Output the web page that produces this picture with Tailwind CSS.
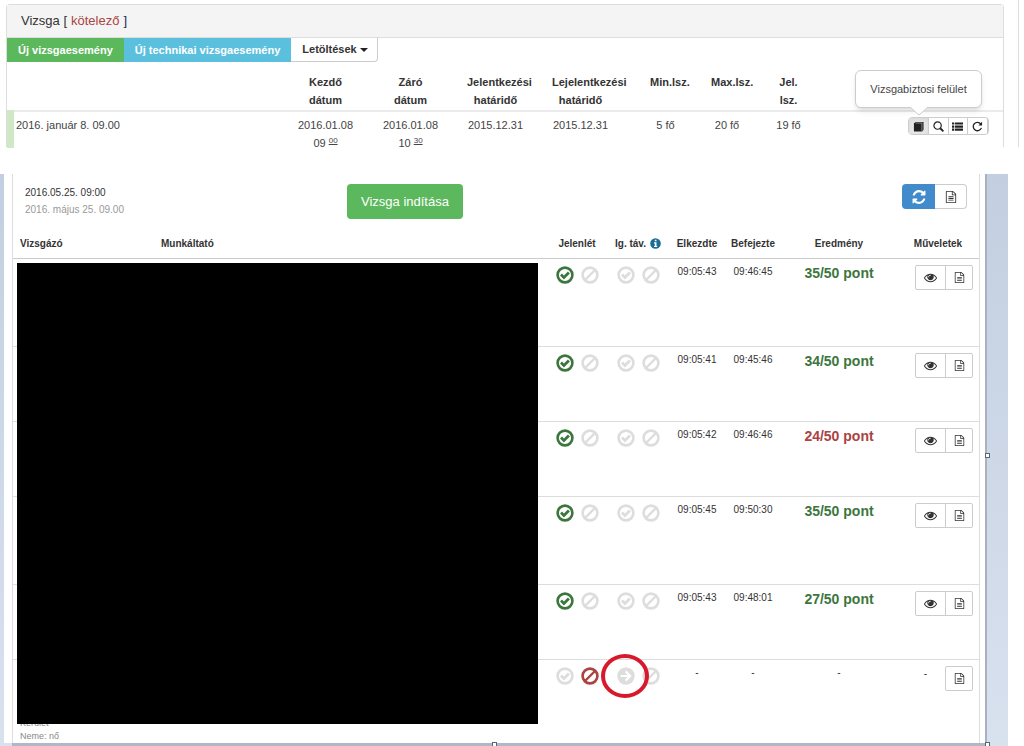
<!DOCTYPE html>
<html lang="hu">
<head>
<meta charset="utf-8">
<meta name="viewport" content="width=device-width, initial-scale=1">
<title>Vizsga</title>
<script src="https://cdn.jsdelivr.net/npm/@tailwindcss/browser@4"></script>
</head>
<body class="bg-white font-['Liberation_Sans',Arial,sans-serif] text-[#333]">
<svg class="hidden" aria-hidden="true">
  <symbol id="check" viewBox="0 0 18 18"><circle cx="9" cy="9" r="7.4" fill="none" stroke="currentColor" stroke-width="2.6"/><path d="M5 8.600l2.900 2.900 5-5" fill="none" stroke="currentColor" stroke-width="2.8"/></symbol>
  <symbol id="ban" viewBox="0 0 18 18"><circle cx="9" cy="9" r="7.4" fill="none" stroke="currentColor" stroke-width="2.6"/><path d="M4 14L14 4" fill="none" stroke="currentColor" stroke-width="2.4"/></symbol>
  <symbol id="arrow" viewBox="0 0 18 18"><circle cx="9" cy="9" r="8.7" fill="currentColor"/><path d="M3.600 9h9M8.600 4.400L13.200 9l-4.600 4.600" fill="none" stroke="#fff" stroke-width="2.2"/></symbol>
  <symbol id="file" viewBox="0 0 1536 1792"><path fill="currentColor" d="M1468 380q28 28 48 76t20 88v1152q0 40-28 68t-68 28H96q-40 0-68-28t-28-68V96q0-40 28-68T96 0h896q40 0 88 20t76 48zm-444-244v376h376q-10-29-22-41l-313-313q-12-12-41-22zm384 1528V640H992q-40 0-68-28t-28-68V128H128v1536h1280zM384 800h768v120H384zM384 1056h768v120H384zM384 1312h768v120H384z"/></symbol>
  <symbol id="eye" viewBox="0 0 1792 1792"><path fill="currentColor" d="M1664 960q-152-236-381-353 61 104 61 225 0 185-131.500 316.500T896 1280t-316.500-131.500T448 832q0-121 61-225-229 117-381 353 133 205 333.500 326.500T896 1408t434.500-121.500T1664 960zM944 576q0-20-14-34t-34-14q-125 0-214.500 89.500T592 832q0 20 14 34t34 14 34-14 14-34q0-86 61-147t147-61q20 0 34-14t14-34zm848 384q0 34-20 69-140 230-376.500 368.500T896 1536t-499.500-139T20 1029q-20-35-20-69t20-69q140-229 376.500-368T896 384t499.500 139T1772 891q20 35 20 69z"/></symbol>
  <symbol id="refresh" viewBox="0 0 1536 1664"><path fill="currentColor" d="M1511 1056q0 5-1 7-64 268-268 434.500T764 1664q-146 0-282.500-55T238 1452l-129 129q-19 19-45 19t-45-19-19-45v-448q0-26 19-45t45-19h448q26 0 45 19t19 45-19 45l-137 137q71 66 161 102t187 36q134 0 250-65t186-179q11-17 53-117 8-23 30-23h192q13 0 22.500 9.500t9.500 22.500zm25-928v448q0 26-19 45t-45 19h-448q-26 0-45-19t-19-45 19-45l138-138Q969 256 768 256q-134 0-250 65T332 500q-11 17-53 117-8 23-30 23H50q-13 0-22.500-9.500T18 608v-7q65-268 270-434.500T768 0q146 0 284 55.500T1297 212l130-129q19-19 45-19t45 19 19 45z"/></symbol>
  <symbol id="book" viewBox="0 0 12 12"><path fill="currentColor" d="M1 2.500L3.200 1H11.500v8.500L10 11.500H1z"/><path d="M3 2.200H10.300M9.700 2.500v8.500" stroke="#aaa" stroke-width=".8" fill="none"/></symbol>
  <symbol id="search" viewBox="0 0 12 12"><circle cx="5" cy="5" r="4" fill="none" stroke="currentColor" stroke-width="1.300"/><path d="M7.900 7.900L11.300 11.300" stroke="currentColor" stroke-width="2"/></symbol>
  <symbol id="list" viewBox="0 0 12 12"><path fill="currentColor" d="M0 1.500h2.500v2.400H0zM3.300 1.500H12v2.400H3.300zM0 4.900h2.500v2.400H0zM3.300 4.900H12v2.400H3.300zM0 8.300h2.500v2.400H0zM3.300 8.300H12v2.400H3.300z"/></symbol>
  <symbol id="repeat" viewBox="0 0 12 12"><path d="M9.600 3.200A4.600 4.600 0 1 0 10.300 7.500" fill="none" stroke="currentColor" stroke-width="1.400"/><path d="M11 .8v4H7z" fill="currentColor"/></symbol>
</svg>

<div class="flex h-[147px]">
  <section class="mt-1 ml-[6px] min-w-0 flex-1 rounded-t border border-b-0 border-[#ddd]">
    <h1 class="flex h-[33px] items-center gap-1 border-b border-[#ddd] bg-[#f4f4f4] px-[14px] text-[13px]"><span>Vizsga [</span><a href="#" class="text-[#a94442]">kötelező</a><span class="text-[#1f2a5c]">]</span></h1>
    <div class="flex h-[24px] text-[11px] font-bold">
      <button class="bg-[#5cb85c] px-[11px] text-white">Új vizsgaesemény</button>
      <button class="bg-[#5bc0de] px-[11px] text-white">Új technikai vizsgaesemény</button>
      <button class="flex items-center gap-[3px] rounded-br border-r border-b border-[#ccc] pr-[9px] pl-[11px] text-[#333]">Letöltések <span class="border-x-4 border-t-4 border-x-transparent border-t-[#222]"></span></button>
    </div>
    <table class="w-full table-fixed text-center text-[11px] leading-[18px]">
      <colgroup><col><col class="w-[85px]"><col class="w-[85px]"><col class="w-[85px]"><col class="w-[97px]"><col class="w-[61px]"><col class="w-[62px]"><col class="w-[61px]"><col class="w-[184px]"></colgroup>
      <thead>
        <tr class="h-[49px] border-b-2 border-[#ebebeb] align-top whitespace-nowrap">
          <td></td>
          <th class="px-[14px] pt-[11px]">Kezdő<br>dátum</th>
          <th class="px-[14px] pt-[11px]">Záró<br>dátum</th>
          <th class="px-[14px] pt-[11px]">Jelentkezési<br>határidő</th>
          <th class="pt-[11px] pr-[26px] pl-[14px]">Lejelentkezési<br>határidő</th>
          <th class="px-[15px] pt-[11px]">Min.lsz.</th>
          <th class="px-[15px] pt-[11px]">Max.lsz.</th>
          <th class="px-[15px] pt-[11px]">Jel.<br>lsz.</th>
          <td></td>
        </tr>
      </thead>
      <tbody class="text-[#444]">
        <tr class="h-[36px] align-top whitespace-nowrap">
          <td class="border-l-[7px] border-[#cfe9c4] pt-1 pl-[2px] text-left">2016. január 8. 09.00</td>
          <td class="pt-1">2016.01.08<div class="h-[14px]">09 <sup class="text-[8px] leading-none underline">00</sup></div></td>
          <td class="pt-1">2016.01.08<div class="h-[14px]">10 <sup class="text-[8px] leading-none underline">30</sup></div></td>
          <td class="px-[14px] pt-1">2015.12.31</td>
          <td class="pt-1 pr-[26px] pl-[14px]">2015.12.31</td>
          <td class="pt-1">5 fő</td>
          <td class="pt-1">20 fő</td>
          <td class="pt-1">19 fő</td>
          <td class="pt-[5px] pr-[14px]">
            <div class="relative ml-auto flex h-[18px] w-[81px] divide-x divide-[#ccc] rounded-sm border border-[#ccc] text-[#222]">
              <button aria-label="Vizsgabiztosi felület" class="flex flex-1 items-center justify-center bg-[#e6e6e6] inset-shadow-sm"><svg class="size-[11px]"><use href="#book"/></svg></button>
              <button aria-label="Keresés" class="flex flex-1 items-center justify-center"><svg class="size-[11px]"><use href="#search"/></svg></button>
              <button aria-label="Lista" class="flex flex-1 items-center justify-center"><svg class="size-[11px]"><use href="#list"/></svg></button>
              <button aria-label="Frissítés" class="flex flex-1 items-center justify-center"><svg class="size-[11px]"><use href="#repeat"/></svg></button>
              <div role="tooltip" class="absolute right-[6px] bottom-[26px] flex h-[38px] w-[127px] items-center justify-center rounded-md border border-[#ccc] bg-white text-[#444] shadow-md">Vizsgabiztosi felület
                <svg class="absolute top-[35px] left-[53px] h-[10px] w-[20px]" viewBox="0 0 20 10"><path d="M0 0L10 9L20 0z" fill="#fff"/><path d="M1 1L10 9L19 1" fill="none" stroke="#ccc"/></svg>
              </div>
            </div>
          </td>
        </tr>
      </tbody>
    </table>
  </section>
  <div class="mr-[5px] ml-[14px] w-px bg-[#ddd]"></div>
</div>

<main class="relative mt-[27px] mr-4 bg-linear-to-b from-[#c3cee0] to-[#d8e2ef] pr-[21px] pl-1">
  <div class="border-r-2 border-[#a9b1c0] bg-white pr-[5px] pl-2">
    <div class="border-x border-[#ddd]">
      <header class="grid h-[56px] grid-cols-3 items-start px-3 pt-[10px]">
        <div class="text-[10px] leading-[17px]"><p>2016.05.25. 09:00</p><p class="text-[#999]">2016. május 25. 09.00</p></div>
        <div class="pl-2"><button class="h-[35px] rounded bg-[#5cb85c] px-[14px] text-[13px] text-white">Vizsga indítása</button></div>
        <div class="ml-auto flex h-[25px]">
          <button aria-label="Frissítés" class="flex w-[33px] items-center justify-center rounded-l bg-[#428bca] text-white"><svg class="size-[14px]"><use href="#refresh"/></svg></button>
          <button aria-label="Dokumentum" class="flex w-[32px] items-center justify-center rounded-r border border-l-0 border-[#ccc]"><svg class="size-[12px]"><use href="#file"/></svg></button>
        </div>
      </header>
      <table class="w-full table-fixed text-center text-[10px]">
        <colgroup><col class="w-[141px]"><col><col class="w-[60px]"><col class="w-[62px]"><col class="w-[56px]"><col class="w-[56px]"><col class="w-[116px]"><col class="w-[82px]"></colgroup>
        <thead>
          <tr class="h-[28px] border-b border-[#ccc] whitespace-nowrap">
            <th class="pl-[7px] text-left">Vizsgázó</th><th class="pl-[7px] text-left">Munkáltató</th><th>Jelenlét</th>
            <th><span class="flex items-center justify-center gap-1">Ig. táv. <svg class="size-[11px]" viewBox="0 0 11 11"><circle cx="5.500" cy="5.500" r="5.300" fill="#1b6d93"/><path d="M4.800 1.800h1.700v1.500H4.800zM4 4.300h2.500v3.600H7.200V9H4V7.900h.8V5.400H4z" fill="#fff"/></svg></span></th>
            <th>Elkezdte</th><th>Befejezte</th><th>Eredmény</th><th>Műveletek</th>
          </tr>
        </thead>
        <tbody id="rows"></tbody>
      </table>
    </div>
  </div>
  <div class="mr-[-2px] ml-2 h-[3px] bg-[#b0b7c6]"></div>
  <!-- anonymised candidate data -->
  <div class="absolute top-[89px] right-[470px] bottom-[22px] left-[17px] bg-black"></div>
  <span class="absolute right-[18px] bottom-[288px] size-[5px] border border-[#567] bg-white"></span>
  <span class="absolute right-[511px] bottom-[-1px] size-[5px] border border-[#567] bg-white"></span>
  <span class="absolute right-[18px] bottom-[-1px] size-[5px] border border-[#567] bg-white"></span>
</main>

<script>
const icon = (name, label, cls) => `<button aria-label="${label}" class="${cls}"><svg class="size-[18px]"><use href="#${name}"/></svg></button>`;
const off = 'text-[#ddd]', yes = 'text-[#3c763d]', no = 'text-[#a94442]';
const file = '<button aria-label="Dokumentum" class="flex flex-1 items-center justify-center"><svg class="size-[11px]"><use href="#file"/></svg></button>';
const eye = '<button aria-label="Megtekintés" class="flex w-[30px] items-center justify-center border-r border-[#ccc]"><svg class="size-[13px]"><use href="#eye"/></svg></button>';
const data = [
  ['09:05:43', '09:46:45', '35/50 pont', yes, 'h-[88px]'],
  ['09:05:41', '09:45:46', '34/50 pont', yes, 'h-[75px]'],
  ['09:05:42', '09:46:46', '24/50 pont', no, 'h-[75px]'],
  ['09:05:45', '09:50:30', '35/50 pont', yes, 'h-[88px]'],
  ['09:05:43', '09:48:01', '27/50 pont', yes, 'h-[75px]'],
];
const row = ([start, end, score, color, height]) => `<tr class="${height} border-b border-[#ddd] align-top">
  <td></td><td></td>
  <td class="pt-[7px]"><div class="flex justify-center gap-[7px]">${icon('check', 'Jelen', yes)}${icon('ban', 'Hiányzik', off)}</div></td>
  <td class="pt-[7px]"><div class="flex justify-center gap-[7px]">${icon('check', 'Igazolt', off)}${icon('ban', 'Nem igazolt', off)}</div></td>
  <td class="pt-[5px]">${start}</td><td class="pt-[5px]">${end}</td>
  <td class="pt-1 text-[14px] leading-5 font-bold ${color}">${score}</td>
  <td class="pt-[6px] pr-[6px]"><div class="ml-auto flex h-[25px] w-[58px] rounded-xs border border-[#ccc]">${eye}${file}</div></td></tr>`;
const last = `<tr class="h-[84px] align-top">
  <td class="pt-[57px] pl-[7px] text-left text-[9px] leading-[13px] text-[#888]">Kerület<br>Neme: nő</td><td></td>
  <td class="pt-[7px]"><div class="flex justify-center gap-[7px]">${icon('check', 'Jelen', off)}${icon('ban', 'Hiányzik', no)}</div></td>
  <td class="pt-[7px]"><div class="relative flex justify-center gap-[7px]">${icon('arrow', 'Igazolás', off)}${icon('ban', 'Nem igazolt', off)}<span class="pointer-events-none absolute top-[-13px] left-[-6px] h-[44px] w-[48px] rounded-[50%] border-4 border-[#d8192c]"></span></div></td>
  <td class="pt-[5px]">-</td><td class="pt-[5px]">-</td><td class="pt-[5px]">-</td>
  <td class="pt-[6px] pr-[6px]"><div class="flex justify-end gap-[18px]"><span>-</span><div class="flex h-[25px] w-[28px] rounded-xs border border-[#ccc]">${file}</div></div></td></tr>`;
document.getElementById('rows').innerHTML = data.map(row).join('') + last;
</script>
</body>
</html>
